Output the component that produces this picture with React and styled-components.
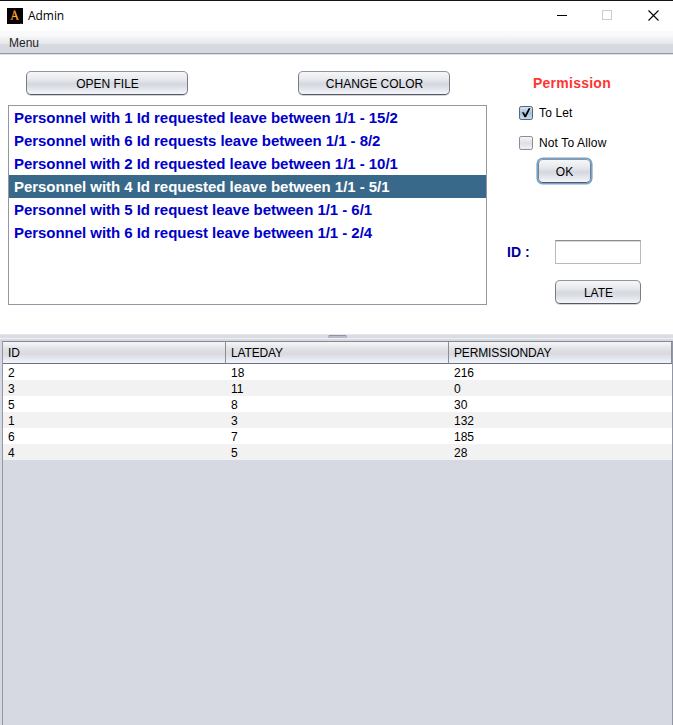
import React from "react";
import styled, { createGlobalStyle } from "styled-components";

const GlobalStyle = createGlobalStyle`
  * { box-sizing: border-box; }
  html, body { margin: 0; padding: 0; overflow: hidden; }
  body { font: 12px/16px "Liberation Sans", Arial, sans-serif; color: #000; background: #fff; }
`;

const Window = styled.div`
  width: 673px;
  height: 725px;
  display: flex;
  flex-direction: column;
  background: #fff;
  border-top: 1px solid #141414;
`;

const TitleBar = styled.header`
  height: 30px;
  flex: none;
  display: flex;
  align-items: center;
  padding: 0 14px 1px 7px;
`;

const Title = styled.span`
  flex: 1;
  margin: 1px 0 0 5px;
  font-family: "Open Sans", sans-serif;
  font-size: 12px;
  letter-spacing: -0.05px;
`;

const WindowControls = styled.div`
  display: flex;
  gap: 35px;
`;

const MenuBar = styled.nav`
  height: 23px;
  flex: none;
  padding: 4px 9px 0;
  color: #232323;
  background: linear-gradient(#f9f9fa 0%, #fafafb 18%, #e4e6eb 58%, #d6d9e0 62%, #d6d9e0 100%);
  border-bottom: 1px solid #9297a5;
`;

const UpperPane = styled.main`
  height: 280px;
  flex: none;
  display: flex;
  border-top: 1px solid #dfe1e7;
`;

const RequestsColumn = styled.section`
  width: 487px;
  padding: 16px 0 0 8px;
`;

const Toolbar = styled.div`
  display: flex;
  gap: 110px;
  padding-left: 18px;
  margin-bottom: 10px;
`;

const Button = styled.button`
  display: block;
  width: ${(p) => p.$width}px;
  height: 24px;
  padding: ${(p) => (p.$focused ? "1px 0 0" : "1px 0 0 1px")};
  font: inherit;
  color: #000;
  border: 1px solid;
  border-color: #92959d #7a7d86 #565960 #7a7d86;
  border-radius: 5px;
  background: linear-gradient(#f6f7f9 0%, #e6e8ec 35%, #d6d9df 52%, #d8dbe2 62%, #f4f6fb 100%);
  box-shadow: ${(p) => (p.$focused ? "0 0 0 1.6px #73a4d1" : "0 1px 0 #d4d5d9")};
`;

const RequestList = styled.ul`
  height: 200px;
  width: 479px;
  margin: 0;
  padding: 0;
  list-style: none;
  border: 1px solid #9297a1;
`;

const Request = styled.li`
  height: 23px;
  padding: 0 5px;
  font-size: 15px;
  line-height: 23px;
  font-weight: bold;
  letter-spacing: -0.04px;
  white-space: pre;
  color: ${(p) => (p.$selected ? "#fff" : "#0000c8")};
  background: ${(p) => (p.$selected ? "#39698a" : "transparent")};
`;

const PermissionColumn = styled.section`
  flex: 1;
  padding: 20px 0 0 20px;
`;

const Heading = styled.h1`
  margin: 0 0 14px 26px;
  font-size: 14px;
  line-height: 16px;
  letter-spacing: 0.25px;
  color: #ff3333;
`;

const CheckRow = styled.label`
  display: flex;
  align-items: center;
  gap: 6px;
  height: 16px;
  margin: 0 0 14px 11px;
  letter-spacing: 0.14px;
`;

const OkSlot = styled.div`
  padding: 0 0 0 31px;
  margin: -6px 0 57px;
`;

const IdRow = styled.div`
  display: flex;
  align-items: center;
  height: 24px;
  margin-bottom: 16px;
`;

const IdLabel = styled.label`
  width: 48px;
  font-size: 14px;
  font-weight: bold;
  color: #000099;
`;

const IdField = styled.input`
  width: 86px;
  height: 24px;
  padding: 0 4px;
  font: inherit;
  background: #fff;
  border: 1px solid #b9babd;
  border-top-color: #8a8c90;
  border-radius: 0;
  box-shadow: inset 0 1px 0 #d8d9dc;
`;

const LateSlot = styled.div`
  padding-left: 48px;
`;

const Divider = styled.div`
  height: 7px;
  flex: none;
  display: flex;
  justify-content: center;
  background: linear-gradient(#e5e7eb 0 1px, #d9dce2 1px 4px, #eef0f3 4px 5px, #d6d9df 5px 7px);
`;

const Grip = styled.span`
  width: 19px;
  height: 3px;
  margin: 1px 0 0 2px;
  border-top: 1px solid #8f93a3;
  border-radius: 2px 2px 0 0;
  background: #b8bbc8;
`;

const TablePane = styled.section`
  flex: 1;
  margin-left: 2px;
  border: 1px solid #9297a5;
  border-top-color: #858890;
  border-bottom: 0;
  background: #d6d9e1;
  box-shadow: -2px 0 0 #d6d9df;
`;

const Table = styled.table`
  width: 669px;
  border-collapse: separate;
  border-spacing: 0;
  table-layout: fixed;
`;

const HeaderCell = styled.th`
  height: 22px;
  padding: 0 5px;
  text-align: left;
  font-weight: normal;
  letter-spacing: -0.14px;
  background: linear-gradient(#f7f7f9 0%, #e2e3e7 30%, #d9dadf 57%, #dddfe5 64%, #eff2fa 95%);
  border-right: 1px solid #8b8e98;
  border-bottom: 1px solid #6d717d;
`;

const Row = styled.tr`
  background: ${(p) => (p.$striped ? "#f2f2f2" : "#fff")};
`;

const Cell = styled.td`
  height: 16px;
  padding: 2px 5px 0;
  line-height: 14px;
`;

const Svg = styled.svg`
  display: block;
  flex: none;
`;

const AppIcon = () => (
  <Svg width="16" height="16" viewBox="0 0 16 16">
    <rect width="16" height="16" fill="#050303" />
    <path d="M3.5 11.5h2.5M9.5 11.5h2.5" stroke="#c85a14" strokeWidth="1" />
    <path d="M4.7 11.5 7.3 3.2" stroke="#c8641e" strokeWidth="1.3" />
    <path d="M7.3 2.5 10.6 11.5" stroke="#f08a22" strokeWidth="1.9" />
    <path d="M5.5 8.5h4.2" stroke="#f6b32c" strokeWidth="1.1" />
    <path d="M13 15.5h2" stroke="#555" strokeWidth=".6" />
  </Svg>
);

const CheckBox = ({ checked, id }) => (
  <Svg width="15" height="15" viewBox="0 0 15 15">
    <defs>
      <linearGradient id={id} x1="0" y1="0" x2="0" y2="1">
        <stop offset="0" stopColor={checked ? "#dce8f2" : "#f7f7f9"} />
        <stop offset=".5" stopColor={checked ? "#a8c1d5" : "#dedfe4"} />
        <stop offset="1" stopColor={checked ? "#c9e0f1" : "#f2f3f7"} />
      </linearGradient>
    </defs>
    <rect x="1.5" y=".5" width="13" height="13" rx="1.7" fill={`url(#${id})`} stroke={checked ? "#4d6880" : "#8a8b93"} />
    {checked && (
      <path d="M4 6.2h1.8L7.2 8.7 10.6 2.2h1.9L8 11.3H6.5Z" fill="#000" />
    )}
  </Svg>
);

const requests = [
  "Personnel with 1 Id requested leave between 1/1 - 15/2",
  "Personnel with 6 Id requests leave between 1/1 - 8/2",
  "Personnel with 2 Id requested leave between 1/1 - 10/1",
  "Personnel with 4 Id requested leave between 1/1 - 5/1",
  "Personnel with 5 Id request leave between 1/1 - 6/1",
  "Personnel with 6 Id request leave between 1/1 - 2/4",
];

const columns = ["ID", "LATEDAY", "PERMISSIONDAY"];
const rows = [
  [2, 18, 216],
  [3, 11, 0],
  [5, 8, 30],
  [1, 3, 132],
  [6, 7, 185],
  [4, 5, 28],
];

export default function App() {
  return (
    <>
      <GlobalStyle />
      <Window>
        <TitleBar>
          <AppIcon />
          <Title>Admin</Title>
          <WindowControls>
            <Svg width="11" height="11" viewBox="0 0 11 11">
              <path d="M1 5.5h10" stroke="#000" />
            </Svg>
            <Svg width="11" height="11" viewBox="0 0 11 11">
              <rect x=".5" y=".5" width="9" height="9" fill="none" stroke="#ccc" />
            </Svg>
            <Svg width="11" height="11" viewBox="0 0 11 11">
              <path d="m.5.5 10 10m0-10-10 10" stroke="#000" strokeWidth="1.1" />
            </Svg>
          </WindowControls>
        </TitleBar>
        <MenuBar>Menu</MenuBar>
        <UpperPane>
          <RequestsColumn>
            <Toolbar>
              <Button $width={162}>OPEN FILE</Button>
              <Button $width={152}>CHANGE COLOR</Button>
            </Toolbar>
            <RequestList>
              {requests.map((text, i) => (
                <Request key={i} $selected={i === 3}>{text}</Request>
              ))}
            </RequestList>
          </RequestsColumn>
          <PermissionColumn>
            <Heading>Permission</Heading>
            <CheckRow>
              <CheckBox checked id="allow" />
              To Let
            </CheckRow>
            <CheckRow>
              <CheckBox id="deny" />
              Not To Allow
            </CheckRow>
            <OkSlot>
              <Button $width={53} $focused>OK</Button>
            </OkSlot>
            <IdRow>
              <IdLabel htmlFor="person-id">ID :</IdLabel>
              <IdField id="person-id" />
            </IdRow>
            <LateSlot>
              <Button $width={86}>LATE</Button>
            </LateSlot>
          </PermissionColumn>
        </UpperPane>
        <Divider>
          <Grip />
        </Divider>
        <TablePane>
          <Table>
            <thead>
              <tr>
                {columns.map((name) => (
                  <HeaderCell key={name}>{name}</HeaderCell>
                ))}
              </tr>
            </thead>
            <tbody>
              {rows.map((cells, i) => (
                <Row key={i} $striped={i % 2 === 1}>
                  {cells.map((value, j) => (
                    <Cell key={j}>{value}</Cell>
                  ))}
                </Row>
              ))}
            </tbody>
          </Table>
        </TablePane>
      </Window>
    </>
  );
}
